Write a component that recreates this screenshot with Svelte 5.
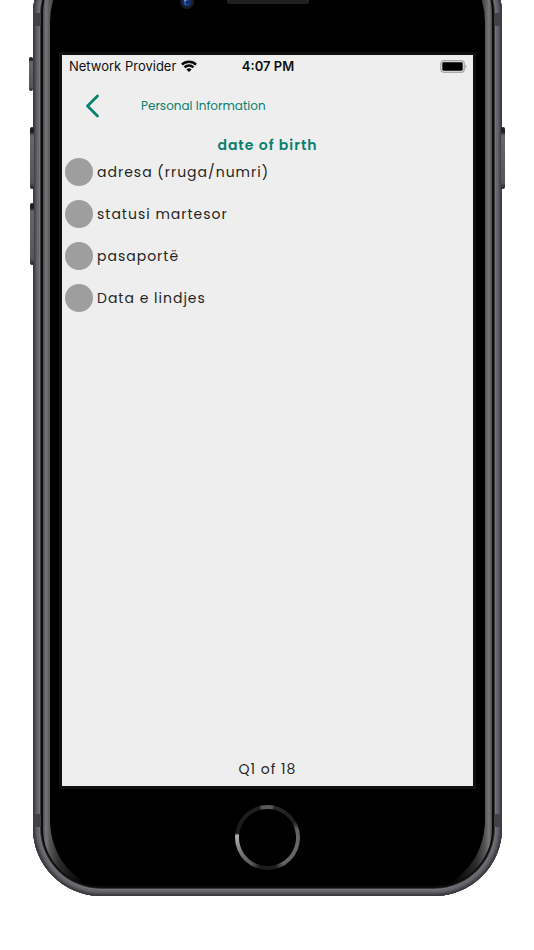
<script lang="ts">
  interface Option {
    id: string;
    label: string;
  }

  const question = "date of birth";
  const current = 1;
  const total = 18;

  const options: Option[] = [
    { id: "address", label: "adresa (rruga/numri)" },
    { id: "marital", label: "statusi martesor" },
    { id: "passport", label: "pasaportë" },
    { id: "birth", label: "Data e lindjes" },
  ];

  let selected = $state("");
</script>

<div class="page">
  <div class="phone">
    <span class="key key--mute"></span>
    <span class="key key--up"></span>
    <span class="key key--down"></span>
    <span class="key key--power"></span>
    <span class="antenna antenna--top"></span>
    <span class="antenna antenna--bottom"></span>

    <div class="rim">
      <div class="face">
        <div class="forehead">
          <svg class="camera" viewBox="0 0 14 14" aria-hidden="true">
            <circle cx="7" cy="7" r="7" fill="#1c1c20" />
            <circle cx="7" cy="7" r="4.6" fill="#172b63" />
            <circle cx="6.4" cy="7.4" r="2.6" fill="#2b55b0" />
            <circle cx="7.4" cy="7.6" r="1.3" fill="#0b1433" />
            <circle cx="5" cy="5.4" r="1" fill="#7890c4" />
          </svg>
          <span class="speaker"></span>
        </div>

        <main class="screen">
          <div class="status">
            <div class="status__carrier">
              <span>Network Provider</span>
              <svg class="wifi" viewBox="0 0 16 12" aria-hidden="true">
                <g fill="none" stroke="#0a0a0a" stroke-width="2.4">
                  <path d="M0.9 4.6a10.1 10.1 0 0 1 14.2 0" />
                  <path d="M3.5 7.4a6.4 6.4 0 0 1 9 0" />
                </g>
                <path d="M8 12 5.4 9.6a3.7 3.7 0 0 1 5.2 0z" fill="#0a0a0a" />
              </svg>
            </div>
            <time class="status__time">4:07 PM</time>
            <svg class="battery" viewBox="0 0 27 13" aria-hidden="true">
              <rect x="0.7" y="0.7" width="23.6" height="11.6" rx="3" fill="#dedede" stroke="#a9a9a9" stroke-width="1.2" />
              <rect x="2.3" y="2.3" width="20.4" height="8.4" rx="1.4" fill="#000" />
              <path d="M25.3 4.4c1.6.6 1.6 3.6 0 4.2z" fill="#a9a9a9" />
            </svg>
          </div>

          <header class="header">
            <button type="button" class="back" aria-label="Back">
              <svg viewBox="0 0 14 24" aria-hidden="true">
                <path d="M12 2 2 12l10 10" fill="none" stroke="#08806f" stroke-width="2.8" stroke-linecap="round" stroke-linejoin="round" />
              </svg>
            </button>
            <h1>Personal Information</h1>
          </header>

          <h2 class="question">{question}</h2>

          <div class="options" role="radiogroup" aria-label={question}>
            {#each options as option (option.id)}
              <label class="option">
                <input type="radio" name="answer" value={option.id} bind:group={selected} />
                <span>{option.label}</span>
              </label>
            {/each}
          </div>

          <footer class="progress">Q{current} of {total}</footer>
        </main>

        <div class="chin">
          <button type="button" class="home" aria-label="Home"></button>
        </div>
      </div>
    </div>
  </div>
</div>

<style>
  :global(body) {
    margin: 0;
    background: #fff;
  }

  .page {
    box-sizing: border-box;
    display: flex;
    min-height: 100vh;
    padding: 0 32px 54px 33px;
    overflow: hidden;
    font-family: Poppins, Inter, sans-serif;
    color: #242424;
  }

  .phone {
    position: relative;
    display: flex;
    flex: 1;
    box-sizing: border-box;
    margin-top: -54px;
    padding: 10px;
    border-radius: 68px;
    background: #0c0c0d;
    box-shadow:
      inset 0 0 0 1px #3a3a3e,
      inset 0 0 0 2px #424247,
      inset 0 0 0 3px #504f56,
      inset 0 0 0 4px #5b5b61,
      inset 0 0 0 6px #67666c,
      inset 0 0 0 7px #77767b,
      inset 0 0 0 8px #38383b;
  }

  .key {
    position: absolute;
    width: 4px;
    height: 62px;
    border-radius: 2px;
    background: linear-gradient(#202024, #202024 8%, #66666c 14%, #55555b 90%, #202024);
  }

  .key--mute {
    top: 111px;
    left: -4px;
    height: 34px;
  }

  .key--up {
    top: 181px;
    left: -3px;
  }

  .key--down {
    top: 257px;
    left: -3px;
  }

  .key--power {
    top: 181px;
    right: -3px;
  }

  .antenna {
    position: absolute;
    right: 1px;
    left: 1px;
    height: 13px;
    border: solid #414146;
    border-width: 0 7px;
  }

  .antenna--top {
    top: 67px;
  }

  .antenna--bottom {
    bottom: 69px;
  }

  .rim {
    position: relative;
    display: flex;
    flex: 1;
    padding: 0 7px;
    border-radius: 57px;
    background: linear-gradient(
      90deg,
      #4c4c4c,
      #777 3px,
      #555 7px,
      #2c2c2c 16px,
      #000 40px,
      #000 calc(100% - 40px),
      #2c2c2c calc(100% - 16px),
      #555 calc(100% - 7px),
      #777 calc(100% - 3px),
      #4c4c4c
    );
  }

  .face {
    display: flex;
    flex: 1;
    flex-direction: column;
    border-radius: 56px / 66px;
    background: #000;
  }

  .forehead {
    position: relative;
    height: 99px;
  }

  .camera {
    position: absolute;
    top: 39px;
    left: calc(50% - 88px);
    width: 14px;
    height: 14px;
  }

  .speaker {
    position: absolute;
    top: 40px;
    left: calc(50% - 41px);
    width: 82px;
    height: 8px;
    border-radius: 3px;
    background: #202020;
  }

  .screen {
    display: flex;
    flex: 1;
    flex-direction: column;
    margin: 0 12px;
    background: #eee;
    box-shadow: 0 0 0 3px #0e0f0f;
  }

  .status {
    display: grid;
    grid-template-columns: 1fr auto 1fr;
    align-items: center;
    height: 22px;
    padding: 0 6px 0 7px;
    font-family: Inter, sans-serif;
    font-size: 13px;
    color: #111;
  }

  .status__carrier {
    display: flex;
    align-items: center;
    gap: 5px;
    white-space: nowrap;
  }

  .status__time {
    font-weight: 600;
  }

  .wifi {
    width: 16px;
    height: 12px;
  }

  .battery {
    justify-self: end;
    width: 27px;
    height: 13px;
  }

  .header {
    display: flex;
    align-items: center;
    gap: 40px;
    height: 58px;
    padding-left: 22px;
  }

  .back {
    width: 17px;
    height: 24px;
    padding: 0;
    border: 0;
    background: none;
    cursor: pointer;
  }

  .back svg {
    display: block;
    width: 17px;
    height: 24px;
  }

  .header h1 {
    margin: 0;
    font-size: 12px;
    font-weight: 400;
    color: #08806f;
  }

  .question {
    margin: 0;
    font-size: 14px;
    font-weight: 600;
    line-height: 20px;
    letter-spacing: 1px;
    text-align: center;
    color: #08806f;
  }

  .options {
    display: flex;
    flex: 1;
    flex-direction: column;
    gap: 14px;
    padding: 3px;
  }

  .option {
    display: flex;
    align-items: center;
    gap: 4px;
    font-size: 14px;
    line-height: 28px;
    letter-spacing: 1px;
    cursor: pointer;
  }

  .option input {
    width: 28px;
    height: 28px;
    margin: 0;
    border-radius: 50%;
    background: #9e9e9e;
    appearance: none;
    cursor: pointer;
  }

  .option input:checked {
    background: #08806f;
  }

  .progress {
    padding-bottom: 6px;
    font-size: 14px;
    line-height: 22px;
    letter-spacing: 1px;
    text-align: center;
  }

  .chin {
    display: flex;
    justify-content: center;
    height: 100px;
    padding-top: 19px;
    box-sizing: border-box;
  }

  .home {
    width: 65px;
    height: 65px;
    padding: 0;
    border: 0;
    border-radius: 50%;
    background:
      radial-gradient(circle, #000 28px, transparent 29px),
      conic-gradient(
        #58585b 9deg,
        #29292c 12deg,
        #1f1f22 60deg,
        #626266 75deg,
        #68686c 110deg,
        #626266 150deg,
        #1c1c1f 165deg,
        #1c1c1f 195deg,
        #55555a 210deg,
        #77777b 240deg,
        #b0b0b3 274deg,
        #1a1a1d 278deg,
        #1f1f22 345deg,
        #58585b 349deg
      );
    cursor: pointer;
  }
</style>
